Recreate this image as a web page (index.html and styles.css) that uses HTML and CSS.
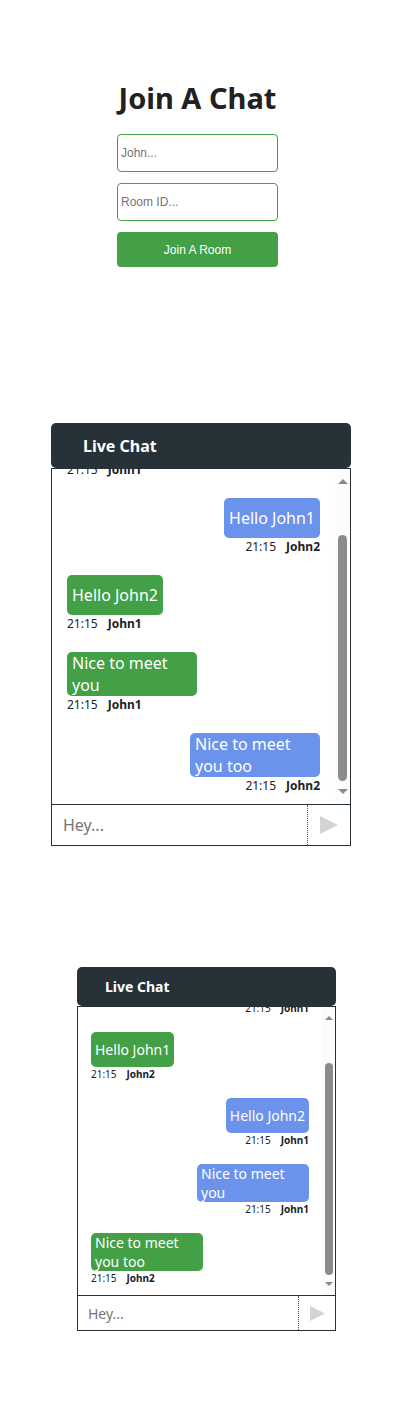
FILE: index.html
```html
<!DOCTYPE html>
<html lang="en">
<head>
<meta charset="utf-8">
<meta name="viewport" content="width=device-width, initial-scale=1">
<title>Live Chat</title>
<link rel="stylesheet" href="styles.css">
</head>
<body>
<main>
  <form class="join">
    <h1 class="join-title">Join A Chat</h1>
    <input class="join-field" type="text" placeholder="John..." aria-label="Name">
    <input class="join-field" type="text" placeholder="Room ID..." aria-label="Room ID">
    <button class="join-button" type="button">Join A Room</button>
  </form>

  <section class="chat">
    <header class="chat-header">Live Chat</header>
    <div class="chat-body">
      <div class="messages">
        <div class="message green"><p class="meta"><time>21:15</time><b>John1</b></p></div>
        <div class="message blue"><p class="bubble">Hello John1</p><p class="meta"><time>21:15</time><b>John2</b></p></div>
        <div class="message green"><p class="bubble">Hello John2</p><p class="meta"><time>21:15</time><b>John1</b></p></div>
        <div class="message green"><p class="bubble">Nice to meet you</p><p class="meta"><time>21:15</time><b>John1</b></p></div>
        <div class="message blue"><p class="bubble">Nice to meet you too</p><p class="meta"><time>21:15</time><b>John2</b></p></div>
      </div>
      <div class="scrollbar" aria-hidden="true">
        <svg class="arrow" viewBox="0 0 10 5"><path d="M0 5L5 0L10 5Z"/></svg>
        <span class="thumb"></span>
        <svg class="arrow" viewBox="0 0 10 5"><path d="M0 0L5 5L10 0Z"/></svg>
      </div>
    </div>
    <form class="composer">
      <input class="composer-input" type="text" placeholder="Hey..." aria-label="Message">
      <button class="send" type="button" aria-label="Send"><svg class="send-icon" viewBox="0 0 18 18"><path d="M0 0L18 9L0 18Z"/></svg></button>
    </form>
  </section>

  <section class="chat small">
    <header class="chat-header">Live Chat</header>
    <div class="chat-body">
      <div class="messages">
        <div class="message blue"><p class="meta"><time>21:15</time><b>John1</b></p></div>
        <div class="message green"><p class="bubble">Hello John1</p><p class="meta"><time>21:15</time><b>John2</b></p></div>
        <div class="message blue"><p class="bubble">Hello John2</p><p class="meta"><time>21:15</time><b>John1</b></p></div>
        <div class="message blue"><p class="bubble">Nice to meet you</p><p class="meta"><time>21:15</time><b>John1</b></p></div>
        <div class="message green"><p class="bubble">Nice to meet you too</p><p class="meta"><time>21:15</time><b>John2</b></p></div>
      </div>
      <div class="scrollbar" aria-hidden="true">
        <svg class="arrow" viewBox="0 0 10 5"><path d="M0 5L5 0L10 5Z"/></svg>
        <span class="thumb"></span>
        <svg class="arrow" viewBox="0 0 10 5"><path d="M0 0L5 5L10 0Z"/></svg>
      </div>
    </div>
    <form class="composer">
      <input class="composer-input" type="text" placeholder="Hey..." aria-label="Message">
      <button class="send" type="button" aria-label="Send"><svg class="send-icon" viewBox="0 0 18 18"><path d="M0 0L18 9L0 18Z"/></svg></button>
    </form>
  </section>
</main>
</body>
</html>
```

FILE: styles.css
```css
* { box-sizing: border-box; }

body {
  margin: 0;
  background: #fff;
  color: #212121;
  font-family: "Noto Sans", "Open Sans", sans-serif;
}

p, h1 { margin: 0; }

main { padding: 78px 0 82px; }

.join {
  display: flex;
  flex-direction: column;
  gap: 11px;
  margin: 0 129px 156px 117px;
}

.join-title {
  margin-bottom: 5px;
  font-size: 29px;
  line-height: 40px;
  text-align: center;
  white-space: nowrap;
}

.join-field {
  width: 100%;
  height: 38px;
  padding: 0 3px;
  border: 1px solid #43a047;
  border-radius: 4px;
  background: #fff;
  font: 12px "Liberation Sans", Arial, sans-serif;
  outline: none;
}

.join-button {
  height: 35px;
  border: 0;
  border-radius: 4px;
  background: #43a047;
  color: #fff;
  font: 12px "Liberation Sans", Arial, sans-serif;
}

::placeholder { color: #757575; opacity: 1; }

.chat {
  --font: 16px;
  --line: 22px;
  --meta: 12px;
  --meta-line: 17px;
  --gap: 20px;
  --bubble: 40px;
  --bubble-max: 130px;
  --bubble-pad: 5px;
  --side: 15px;
  --indent: 32px;
  --header: 45px;
  --view: 337px;
  --end: 10px;
  --composer: 41px;
  --composer-pad: 11px;
  --send: 43px;
  --icon: 18px;
  --arrow: 10px;
  --thumb-start: 51px;
  --thumb: 9px;
  --thumb-gap: 8px;
  margin: 0 56px 121px 51px;
  font-size: var(--font);
  line-height: var(--line);
}

.chat.small {
  --font: 14px;
  --line: 19px;
  --meta: 10px;
  --meta-line: 15px;
  --gap: 16px;
  --bubble: 35px;
  --bubble-max: 112px;
  --bubble-pad: 4px;
  --side: 13px;
  --indent: 28px;
  --header: 39px;
  --view: 290px;
  --end: 9px;
  --composer: 35px;
  --composer-pad: 10px;
  --send: 37px;
  --icon: 15px;
  --arrow: 8px;
  --thumb-start: 43px;
  --thumb: 8px;
  --thumb-gap: 7px;
  margin: 0 71px 0 77px;
}

.chat-header {
  display: flex;
  align-items: center;
  height: var(--header);
  padding-left: var(--indent);
  border-radius: 5px;
  background: #263238;
  color: #fff;
  font-weight: 700;
}

.chat-body {
  display: flex;
  height: var(--view);
  border: 1px solid #263238;
}

.messages {
  display: flex;
  flex: 1;
  flex-direction: column;
  justify-content: flex-end;
  gap: var(--gap);
  padding: 0 var(--side) var(--end);
  overflow: hidden;
}

.message {
  display: flex;
  flex-direction: column;
  flex-shrink: 0;
  align-items: flex-start;
}

.message.blue { align-items: flex-end; }

.bubble {
  display: flex;
  align-items: center;
  min-height: var(--bubble);
  max-width: var(--bubble-max);
  padding: 0 var(--bubble-pad);
  border-radius: 5px;
  color: #fff;
}

.green .bubble { background: #43a047; }
.blue .bubble { background: #6c93ec; }

.meta {
  display: flex;
  gap: 10px;
  font-size: var(--meta);
  line-height: var(--meta-line);
}

.scrollbar {
  display: flex;
  flex-direction: column;
  align-items: center;
  width: var(--side);
  padding: var(--end) 0;
  background: #fcfcfc;
}

.arrow {
  display: block;
  width: var(--arrow);
  fill: #8b8b8b;
}

.thumb {
  flex: 1;
  width: var(--thumb);
  margin: var(--thumb-start) 0 var(--thumb-gap);
  border-radius: var(--thumb);
  background: #8b8b8b;
}

.composer {
  display: flex;
  height: var(--composer);
  border: 1px solid #263238;
  border-top: 0;
}

.composer-input {
  flex: 1;
  min-width: 0;
  padding: 0 var(--composer-pad);
  border: 0;
  background: #fff;
  font: inherit;
  outline: none;
}

.send {
  display: flex;
  align-items: center;
  justify-content: center;
  width: var(--send);
  padding: 0;
  border: 0;
  border-left: 1px dotted #455a64;
  background: #fff;
}

.send-icon {
  width: var(--icon);
  fill: #d3d3d3;
}
```
